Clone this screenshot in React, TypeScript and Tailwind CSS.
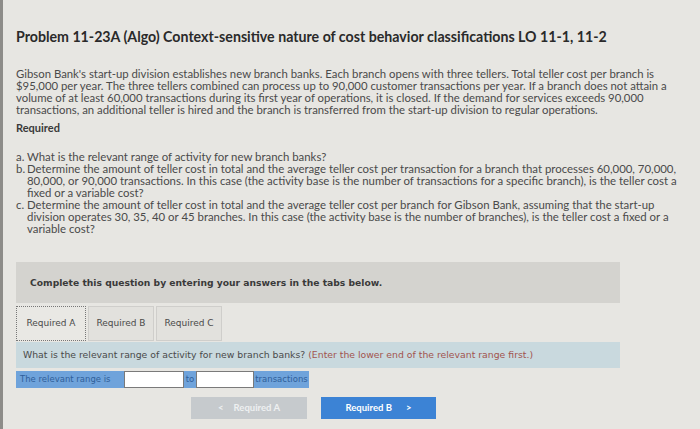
import React from "react";

const sans = { fontFamily: "Lato, 'Open Sans', sans-serif" };
const verdana = { fontFamily: "'DejaVu Sans', Verdana, sans-serif" };

export default function App() {
  return (
    <div className="w-[700px] h-[429px] overflow-hidden bg-[#e7e6e2] border-l-[3px] border-[#8d8c89] relative">
      <div className="pl-[13px] pr-2" style={sans}>
        <h1 className="pt-[28px] text-[14.2px] leading-[18px] font-bold text-[#2a2a2a] whitespace-nowrap">
          Problem 11-23A (Algo) Context-sensitive nature of cost behavior classifications LO 11-1, 11-2
        </h1>
        <div className="mt-[22px] text-[11.35px] leading-[12px] text-[#4a4a4a] whitespace-nowrap">
          <div>Gibson Bank's start-up division establishes new branch banks. Each branch opens with three tellers. Total teller cost per branch is</div>
          <div>$95,000 per year. The three tellers combined can process up to 90,000 customer transactions per year. If a branch does not attain a</div>
          <div>volume of at least 60,000 transactions during its first year of operations, it is closed. If the demand for services exceeds 90,000</div>
          <div>transactions, an additional teller is hired and the branch is transferred from the start-up division to regular operations.</div>
        </div>
        <div className="mt-[5px] text-[11px] leading-[14px] font-bold text-[#3a3a3a]">Required</div>
        <div className="mt-[16px] text-[11.4px] leading-[12px] text-[#4a4a4a] whitespace-nowrap">
          <div className="flex"><span className="w-[11px] shrink-0">a.</span><span>What is the relevant range of activity for new branch banks?</span></div>
          <div className="flex">
            <span className="w-[11px] shrink-0">b.</span>
            <div>
              <div>Determine the amount of teller cost in total and the average teller cost per transaction for a branch that processes 60,000, 70,000,</div>
              <div>80,000, or 90,000 transactions. In this case (the activity base is the number of transactions for a specific branch), is the teller cost a</div>
              <div>fixed or a variable cost?</div>
            </div>
          </div>
          <div className="flex">
            <span className="w-[11px] shrink-0">c.</span>
            <div>
              <div>Determine the amount of teller cost in total and the average teller cost per branch for Gibson Bank, assuming that the start-up</div>
              <div>division operates 30, 35, 40 or 45 branches. In this case (the activity base is the number of branches), is the teller cost a fixed or a</div>
              <div>variable cost?</div>
            </div>
          </div>
        </div>
      </div>

      <div className="ml-[13px] w-[604px] mt-[27px]" style={verdana}>
        <div className="h-[41px] bg-[#d4d3cf] flex items-center pl-[14px] text-[9.2px] font-bold text-[#3a3a3a]">
          Complete this question by entering your answers in the tabs below.
        </div>
        <div className="mt-[3px] flex gap-[2px] h-[35px] text-[9px] text-[#4a4a4a]">
          <div className="w-[70px] border border-dotted border-[#777] bg-[#e9e8e4] flex items-center justify-center">Required A</div>
          <div className="w-[66px] border border-[#cfcecb] bg-[#e2e1dd] flex items-center justify-center">Required B</div>
          <div className="w-[66px] border border-[#cfcecb] bg-[#e2e1dd] flex items-center justify-center">Required C</div>
        </div>
        <div className="mt-[1px] h-[26px] bg-[#c9d9de] flex items-center pl-[7px] text-[9.3px] text-[#4a4a4a] whitespace-nowrap">
          What is the relevant range of activity for new branch banks?&nbsp;<span className="text-[#a2544e]">(Enter the lower end of the relevant range first.)</span>
        </div>
        <div className="mt-[3px] flex h-[17px] text-[8.5px] text-[#2f5f9a]">
          <div className="w-[108px] bg-[#6fa3db] flex items-center pl-[4px]">The relevant range is</div>
          <div className="w-[60px] bg-white border border-[#7a7a7a]"></div>
          <div className="w-[12px] bg-[#6fa3db] flex items-center justify-center">to</div>
          <div className="w-[58px] bg-white border border-[#7a7a7a]"></div>
          <div className="w-[55px] bg-[#6fa3db] flex items-center justify-center">transactions</div>
        </div>
        <div className="mt-[9px] flex gap-[14px] pl-[175px] h-[22px] text-[9.5px] font-bold" style={sans}>
          <div className="w-[116px] bg-[#c6cacd] text-[#eef0f1] flex items-center justify-center gap-[10px]">
            <span>&lt;</span><span>Required A</span>
          </div>
          <div className="w-[115px] bg-[#3c83d5] text-white flex items-center justify-center gap-[14px]">
            <span>Required B</span><span>&gt;</span>
          </div>
        </div>
      </div>
    </div>
  );
}
